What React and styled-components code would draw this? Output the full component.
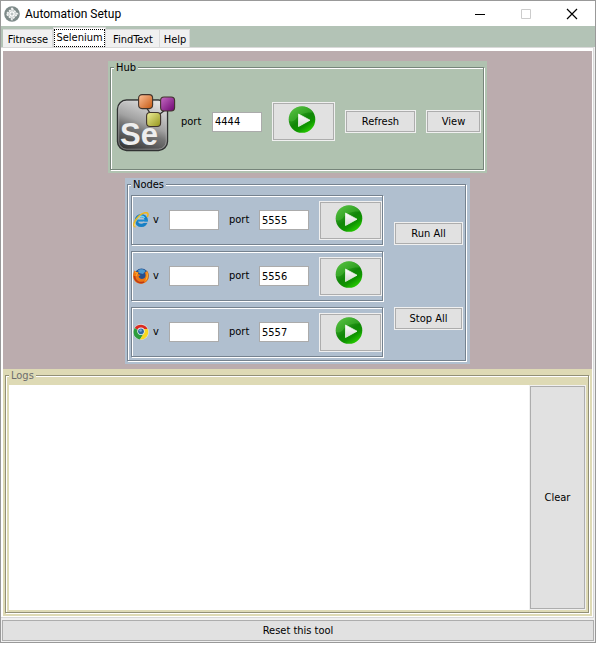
import React, { useId } from "react";
import styled, { createGlobalStyle } from "styled-components";

const GlobalStyle = createGlobalStyle`
  * { box-sizing: border-box; }
  body {
    margin: 0;
    background: #fff;
    color: #000;
    font: 11px/14px "DejaVu Sans Condensed", "DejaVu Sans", sans-serif;
  }
  button, input, textarea { font: inherit; color: inherit; }
`;

const Window = styled.main`
  display: flex;
  flex-direction: column;
  min-height: calc(100vh - 3px);
  margin: 0 3px 3px 0;
  border: 1px solid #999;
  background: #f0f0f0;
`;

const TitleBar = styled.header`
  display: flex;
  align-items: center;
  height: 25px;
  padding-left: 3px;
  background: #fff;
`;

const Title = styled.h1`
  flex: 1;
  margin: 0 0 0 5px;
  font: 12px/16px Roboto, sans-serif;
`;

const WindowButton = styled.button`
  display: flex;
  align-items: center;
  justify-content: center;
  width: 46px;
  height: 25px;
  padding: 0;
  border: 0;
  background: transparent;
`;

const TabStrip = styled.div`
  display: flex;
  align-items: flex-end;
  height: 21px;
  padding-left: 2px;
  background: #b3c3b6;
`;

const Tab = styled.button`
  width: ${(p) => p.$width}px;
  height: ${(p) => (p.$active ? 20 : 18)}px;
  padding: ${(p) => (p.$active ? "0" : "2px 0 0 1px")};
  white-space: nowrap;
  border: 1px solid #d9d9d9;
  border-bottom: 0;
  border-left-width: ${(p) => (p.$active ? 1 : 0)}px;
  background: ${(p) => (p.$active ? "#fff" : "#f0f0f0")};
`;

const FocusRing = styled.span`
  display: block;
  height: 18px;
  line-height: 16px;
  border: 1px dotted #000;
`;

const TabPane = styled.div`
  flex: 1;
  display: flex;
  flex-direction: column;
  margin-right: 1px;
  padding: 3px 1px 1px 2px;
  border: 1px solid #d9d9d9;
  border-left: 0;
  background: #fff;
`;

const Workspace = styled.section`
  display: flex;
  flex-direction: column;
  align-items: center;
  gap: 5px;
  padding: 10px 0 5px;
  background: #bbacae;
`;

const Panel = styled.div`
  padding: 0 3px 3px 2px;
  background: ${(p) => p.$color};
`;

const NodesPanel = styled(Panel)`
  padding-right: 4px;
`;

const Group = styled.fieldset`
  min-width: 0;
  margin: 0;
  padding: 0;
  border: 1px solid ${(p) => p.$line};
  box-shadow: 1px 1px 0 #fff, inset 1px 1px 0 #fff;
`;

const Legend = styled.legend`
  margin-left: 3px;
  padding: 0 2px;
  line-height: 13px;
  color: ${(p) => p.$ink || "#000"};
  background: ${(p) => p.$color};
`;

const HubRow = styled.div`
  display: flex;
  align-items: center;
  gap: 10px;
  height: 95px;
  padding: 0 2px 0 5px;
`;

const HubPort = styled.div`
  display: flex;
  align-items: center;
  gap: 5px;
`;

const Label = styled.label`
  flex: none;
  width: ${(p) => p.$width}px;
`;

const Field = styled.input`
  width: 50px;
  height: 20px;
  padding: 0 2px;
  border: 1px solid #ababab;
  border-radius: 0;
  background: #fff;
`;

const Button = styled.button`
  display: flex;
  align-items: center;
  justify-content: center;
  width: ${(p) => p.$width}px;
  height: 23px;
  padding: 0;
  border: 1px solid #f0f0f0;
  outline: 1px solid #adadad;
  outline-offset: -2px;
  background: #e1e1e1;
`;

const PlayButton = styled(Button)`
  width: 63px;
  height: 39px;
  padding-bottom: 1px;
`;

const NodesBody = styled.div`
  display: flex;
  gap: 11px;
  padding: 4px 2px 2px 3px;
`;

const NodeList = styled.div`
  display: flex;
  flex-direction: column;
  gap: 5px;
`;

const NodeRow = styled.div`
  display: flex;
  align-items: center;
  width: 252px;
  height: 50px;
  margin-bottom: 1px;
  padding: 0 0 0 1px;
  border: 1px solid #75828f;
  box-shadow: 1px 1px 0 #fff, inset 1px 1px 0 #fff;
`;

const NodeFields = styled.div`
  display: flex;
  flex: 1;
  align-items: center;
  gap: 10px;
  margin-left: 4px;
`;

const BulkActions = styled.div`
  display: flex;
  flex-direction: column;
  justify-content: space-between;
  padding: 27px 0 28px;
`;

const Logs = styled(Panel)`
  display: flex;
  flex: 1;
`;

const LogsGroup = styled(Group)`
  display: flex;
  flex-direction: column;
  flex: 1;
`;

const LogsBody = styled.div`
  display: flex;
  height: 100%;
  min-height: 226px;
  padding: 3px 2px 2px 3px;
`;

const LogText = styled.textarea`
  flex: 1;
  min-width: 0;
  padding: 2px;
  border: 0;
  resize: none;
  background: #fff;
`;

const ClearButton = styled(Button)`
  height: auto;
`;

const ResetButton = styled(Button)`
  width: auto;
  margin-top: 1px;
`;

const Icon = styled.svg`
  display: block;
  flex: none;
`;

function AppIcon() {
  return (
    <Icon width="16" height="16" viewBox="0 0 16 16" aria-hidden="true">
      <circle cx="8" cy="8" r="7.8" fill="#7d8a89" />
      <path d="M8 2.5 13.5 8 8 13.5 2.5 8Z" fill="#cfd4d3" stroke="#f4f4f4" strokeWidth="1.6" strokeDasharray="2 1" />
      <path d="M5 8h6M8 5v6M6 6l4 4M10 6l-4 4" stroke="#fff" strokeWidth="1" />
      <circle cx="8" cy="8" r="1" fill="#a3adac" />
    </Icon>
  );
}

function PlayIcon() {
  const id = useId();
  return (
    <Icon width="31" height="32" viewBox="0 0 31 32" aria-hidden="true">
      <defs>
        <linearGradient id={id + "g"} x1="0.2" y1="0" x2="0.85" y2="1">
          <stop offset="0" stopColor="#4fb83c" />
          <stop offset="0.5" stopColor="#118608" />
          <stop offset="0.7" stopColor="#0f9400" />
          <stop offset="1" stopColor="#2fe000" />
        </linearGradient>
        <linearGradient id={id + "w"} x1="0" y1="0" x2="0" y2="1">
          <stop offset="0" stopColor="#fff" />
          <stop offset="1" stopColor="#d4d4d4" />
        </linearGradient>
      </defs>
      <circle cx="14" cy="14.500" r="13.3" fill={`url(#${id}g)`} />
      <path d="M1 16C0 7 6 1.500 14 1.500c5 0 9 3 11 6C17 7 11 9 8 14c-2 2-4 3-7 2Z" fill="#65cf4b" opacity=".3" />
      <path d="M10.500 9v12.500L22 15.200Z" fill={`url(#${id}w)`} stroke="#e9f5e6" strokeWidth=".8" strokeLinejoin="round" />
    </Icon>
  );
}

function SeleniumLogo() {
  const id = useId();
  const cube = (x, y, name) => (
    <rect x={x} y={y} width="14" height="14" rx="3.5" fill={`url(#${id}${name})`} stroke="#40342d" strokeWidth="1.1" />
  );
  const stops = (name, a, b) => (
    <linearGradient id={id + name} x1="0" y1="0" x2="1" y2="1">
      <stop offset="0" stopColor={a} />
      <stop offset="1" stopColor={b} />
    </linearGradient>
  );
  return (
    <Icon width="60" height="60" viewBox="0 0 60 60" role="img" aria-label="Selenium">
      <defs>
        <linearGradient id={id + "body"} x1="0.7" y1="0" x2="0.3" y2="1">
          <stop offset="0" stopColor="#e3e3e3" />
          <stop offset="0.45" stopColor="#a2a2a2" />
          <stop offset="0.6" stopColor="#777" />
          <stop offset="1" stopColor="#383838" />
        </linearGradient>
        {stops("o", "#ffc39b", "#c4560f")}
        {stops("p", "#c66cc4", "#6c0570")}
        {stops("y", "#f0f09a", "#93931a")}
      </defs>
      <rect x="1.500" y="8" width="50" height="50.500" rx="9" fill={`url(#${id}body)`} stroke="#303232" strokeWidth="1.4" />
      <rect x="2.700" y="9.200" width="47.600" height="48" rx="8" fill="none" stroke="#d5d5d5" strokeWidth=".7" opacity=".6" />
      <path d="M30 15l6 9M49 18l-9 7" stroke="#2e2e2e" strokeWidth="1.3" />
      <text x="4" y="53" fill="#eee" fontFamily="Liberation Sans, sans-serif" fontWeight="700" fontSize="31">Se</text>
      {cube(22.6, 2.6, "o")}
      {cube(44.6, 5, "p")}
      {cube(30.6, 20.5, "y")}
    </Icon>
  );
}

function ExplorerIcon() {
  return (
    <Icon width="16" height="16" viewBox="0 0 16 16" aria-hidden="true">
      <circle cx="8.300" cy="8.500" r="4.900" fill="none" stroke="#167fc5" strokeWidth="3.4" />
      <path d="M5 7.300C5.500 4 10 3 11.500 6" fill="none" stroke="#6ed3f7" strokeWidth="1.4" />
      <path d="M5 8.600h9.500" stroke="#1a8ad0" strokeWidth="2" />
      <path d="M10 10.300h5.500" stroke="#b0bfcf" strokeWidth="1.2" />
      <path d="M2.500 15C-1 14.500 1.500 8 6 4c4-3.500 8.500-4.300 9-2 .2 1-.2 2-.8 3" fill="none" stroke="#efb71d" strokeWidth="1.6" />
      <path d="M1.800 14.300C1 12 4 7 7.500 4.200" fill="none" stroke="#ffe681" strokeWidth=".6" />
    </Icon>
  );
}

function FirefoxIcon() {
  return (
    <Icon width="16" height="16" viewBox="0 0 16 16" aria-hidden="true">
      <circle cx="8.500" cy="7.800" r="7.300" fill="#26508e" />
      <path d="M5 2.500c2-2 6-1.500 7.500.5L10 6 6 5Z" fill="#4d9bd0" />
      <path d="M1.500 2.500 3.500 4l2.200.1L5 6l2.500 1-2 1.500c1 3 5 3 6.500 1 1-2 .5-4-.5-5.500C14 5 14 2.500 13.500 2c3 3 3 9-.5 12-4 3-9 2-11.500-1.500S0 5 1.500 2.500Z" fill="#ed7615" />
      <path d="M13.500 3c2 4 1.500 8-1.500 10 2-3 2-6 1.500-10" fill="#ffcb36" />
      <path d="M1.500 8c0 5 5 8 9.500 6" fill="none" stroke="#bd3b17" strokeWidth="1.6" />
      <path d="M2 4.500 4.500 5 3 8" fill="none" stroke="#ffb02d" />
    </Icon>
  );
}

function ChromeIcon() {
  return (
    <Icon width="16" height="16" viewBox="0 0 16 16" aria-hidden="true">
      <circle cx="8" cy="8" r="7.900" fill="#e2e5e4" />
      <path d="M8 8 1.700 4A7.400 7.400 0 0 1 14.600 5H8Z" fill="#db2b20" />
      <path d="M8 8 1.700 4A7.400 7.400 0 0 0 7 15.400L10.500 10Z" fill="#2d9d3c" />
      <path d="M8 5h6.600A7.400 7.400 0 0 1 7 15.400L10.700 9.500Z" fill="#f9d71f" />
      <circle cx="8" cy="7.300" r="3.700" fill="#e9eef2" />
      <circle cx="8" cy="7.300" r="2.900" fill="#31679f" />
      <circle cx="7.500" cy="6.500" r="1.300" fill="#7aacd6" />
    </Icon>
  );
}

const tabs = [
  { name: "Fitnesse", width: 50 },
  { name: "Selenium", width: 53, active: true },
  { name: "FindText", width: 54 },
  { name: "Help", width: 30 },
];

const nodes = [
  { name: "Internet Explorer", port: "5555", Logo: ExplorerIcon },
  { name: "Firefox", port: "5556", Logo: FirefoxIcon },
  { name: "Chrome", port: "5557", Logo: ChromeIcon },
];

function Node({ name, port, Logo }) {
  const id = useId();
  return (
    <NodeRow role="group" aria-label={name}>
      <Logo />
      <NodeFields>
        <Label $width={6} htmlFor={id + "v"}>v</Label>
        <Field id={id + "v"} />
        <Label $width={20} htmlFor={id + "port"}>port</Label>
        <Field id={id + "port"} defaultValue={port} />
        <PlayButton aria-label={`Start ${name}`}><PlayIcon /></PlayButton>
      </NodeFields>
    </NodeRow>
  );
}

export default function App() {
  return (
    <>
      <GlobalStyle />
      <Window>
        <TitleBar>
          <AppIcon />
          <Title>Automation Setup</Title>
          <WindowButton aria-label="Minimize">
            <Icon width="12" height="12" viewBox="0 0 12 12"><path d="M1 6.500h10" stroke="#000" /></Icon>
          </WindowButton>
          <WindowButton aria-label="Maximize" disabled>
            <Icon width="12" height="12" viewBox="0 0 12 12"><path d="M1.500 1.500h9v9h-9Z" fill="none" stroke="#ccc" /></Icon>
          </WindowButton>
          <WindowButton aria-label="Close">
            <Icon width="12" height="12" viewBox="0 0 12 12"><path d="m1 1 10 10M11 1 1 11" stroke="#000" strokeWidth="1.2" /></Icon>
          </WindowButton>
        </TitleBar>
        <TabStrip role="tablist">
          {tabs.map((t) => (
            <Tab key={t.name} role="tab" aria-selected={!!t.active} $active={t.active} $width={t.width}>
              {t.active ? <FocusRing>{t.name}</FocusRing> : t.name}
            </Tab>
          ))}
        </TabStrip>
        <TabPane role="tabpanel">
          <Workspace>
            <Panel $color="#b0c2b0">
              <Group $line="#76857a">
                <Legend $color="#b0c2b0">Hub</Legend>
                <HubRow>
                  <HubPort>
                    <SeleniumLogo />
                    <Label $width={21} htmlFor="hub-port">port</Label>
                  </HubPort>
                  <Field id="hub-port" defaultValue="4444" />
                  <PlayButton aria-label="Start hub"><PlayIcon /></PlayButton>
                  <Button $width={71}>Refresh</Button>
                  <Button $width={55}>View</Button>
                </HubRow>
              </Group>
            </Panel>
            <NodesPanel $color="#b0bfcf">
              <Group $line="#75828f">
                <Legend $color="#b0bfcf">Nodes</Legend>
                <NodesBody>
                  <NodeList>
                    {nodes.map((n) => <Node key={n.name} {...n} />)}
                  </NodeList>
                  <BulkActions>
                    <Button $width={69}>Run All</Button>
                    <Button $width={69}>Stop All</Button>
                  </BulkActions>
                </NodesBody>
              </Group>
            </NodesPanel>
          </Workspace>
          <Logs $color="#dedab5">
            <LogsGroup $line="#929077">
              <Legend $color="#dedab5" $ink="#6d6d6d">Logs</Legend>
              <LogsBody>
                <LogText aria-label="Logs" readOnly />
                <ClearButton $width={57}>Clear</ClearButton>
              </LogsBody>
            </LogsGroup>
          </Logs>
        </TabPane>
        <ResetButton>Reset this tool</ResetButton>
      </Window>
    </>
  );
}
